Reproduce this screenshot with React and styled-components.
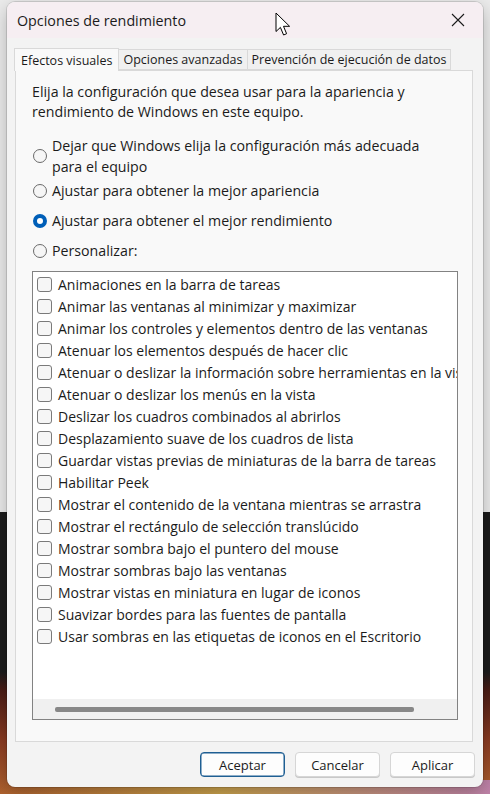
import { createGlobalStyle, styled } from 'styled-components';

const GlobalStyle = createGlobalStyle`
  html, body {
    margin: 0;
    height: 100%;
  }
  body {
    font-family: 'Open Sans', 'Noto Sans', sans-serif;
    color: #1b1b1b;
    background:
      linear-gradient(to right, rgba(214, 150, 60, 0) 0, rgba(214, 190, 90, 0.7) 45%, rgba(196, 140, 200, 0.8) 100%) bottom / 100% 14px no-repeat,
      linear-gradient(
        to bottom,
        #ebebeb 0,
        #ebebeb 512px,
        #1c1c1c 512px,
        #1c1c1c 672px,
        #4a1d16 690px,
        #8a3b22 740px,
        #b0622e 794px
      );
    overflow: hidden;
  }
`;

const options = [
  { label: ['Dejar que Windows elija la configuración más adecuada', 'para el equipo'], gap: 3 },
  { label: ['Ajustar para obtener la mejor apariencia'], gap: 9 },
  { label: ['Ajustar para obtener el mejor rendimiento'], gap: 9, checked: true },
  { label: ['Personalizar:'], gap: 0 },
];

const effects = [
  'Animaciones en la barra de tareas',
  'Animar las ventanas al minimizar y maximizar',
  'Animar los controles y elementos dentro de las ventanas',
  'Atenuar los elementos después de hacer clic',
  'Atenuar o deslizar la información sobre herramientas en la vista',
  'Atenuar o deslizar los menús en la vista',
  'Deslizar los cuadros combinados al abrirlos',
  'Desplazamiento suave de los cuadros de lista',
  'Guardar vistas previas de miniaturas de la barra de tareas',
  'Habilitar Peek',
  'Mostrar el contenido de la ventana mientras se arrastra',
  'Mostrar el rectángulo de selección translúcido',
  'Mostrar sombra bajo el puntero del mouse',
  'Mostrar sombras bajo las ventanas',
  'Mostrar vistas en miniatura en lugar de iconos',
  'Suavizar bordes para las fuentes de pantalla',
  'Usar sombras en las etiquetas de iconos en el Escritorio',
];

const tabs = ['Efectos visuales', 'Opciones avanzadas', 'Prevención de ejecución de datos'];

const CloseIcon = () => (
  <svg width="14" height="14" viewBox="0 0 14 14">
    <path d="M1 1 L13 13 M13 1 L1 13" stroke="#1b1b1b" strokeWidth="1.1" fill="none" />
  </svg>
);

const Pointer = () => (
  <Cursor width="17" height="25" viewBox="0 0 17 25">
    <path
      d="M1 1 L1 19.5 L5.4 15.4 L8.6 23 L11.6 21.7 L8.5 14.3 L14.6 14.3 Z"
      fill="#fff"
      stroke="#000"
      strokeWidth="1"
      strokeLinejoin="round"
    />
  </Cursor>
);

export default function App() {
  return (
    <>
      <GlobalStyle />
      <Window>
        <TitleBar>
          <Title>Opciones de rendimiento</Title>
          <Pointer />
          <CloseButton>
            <CloseIcon />
          </CloseButton>
        </TitleBar>

        <Content>
          <TabStrip>
            {tabs.map((t, i) => (
              <Tab key={t} $active={i === 0}>
                {t}
              </Tab>
            ))}
          </TabStrip>

          <Panel>
            <Intro>
              Elija la configuración que desea usar para la apariencia y
              <br />
              rendimiento de Windows en este equipo.
            </Intro>

            <RadioGroup>
              {options.map((o) => (
                <RadioRow key={o.label[0]} $gap={o.gap}>
                  <Radio $checked={o.checked} />
                  <RadioLabel>
                    {o.label.map((line) => (
                      <div key={line}>{line}</div>
                    ))}
                  </RadioLabel>
                </RadioRow>
              ))}
            </RadioGroup>

            <ListBox>
              <Items>
                {effects.map((e) => (
                  <Item key={e}>
                    <Check />
                    <span>{e}</span>
                  </Item>
                ))}
              </Items>
              <HScroll>
                <Thumb />
              </HScroll>
            </ListBox>
          </Panel>

          <Footer>
            <Button $primary>Aceptar</Button>
            <Button>Cancelar</Button>
            <Button>Aplicar</Button>
          </Footer>
        </Content>
      </Window>
    </>
  );
}

const Window = styled.div`
  width: 476px;
  height: 785px;
  margin: 2px 0 0 7px;
  display: flex;
  flex-direction: column;
  background: #f3f3f3;
  border-radius: 8px;
  overflow: hidden;
  box-shadow: 0 0 0 1px rgba(0, 0, 0, 0.12), 0 6px 18px rgba(0, 0, 0, 0.25);
`;

const TitleBar = styled.div`
  position: relative;
  height: 36px;
  flex: none;
  display: flex;
  align-items: center;
  justify-content: space-between;
  padding-left: 10px;
  background: #f6eef2;
`;

const Title = styled.div`
  font-size: 14.3px;
  color: #1b1b1b;
`;

const Cursor = styled.svg`
  position: absolute;
  left: 268px;
  top: 10px;
`;

const CloseButton = styled.div`
  width: 46px;
  height: 36px;
  display: flex;
  align-items: center;
  justify-content: center;
  margin-right: 2px;
`;

const Content = styled.div`
  flex: 1;
  display: flex;
  flex-direction: column;
  padding: 9px 10px 10px 8px;
`;

const TabStrip = styled.div`
  height: 23px;
  display: flex;
  align-items: flex-end;
  margin-left: -1px;
`;

const Tab = styled.div`
  height: ${(p) => (p.$active ? '23px' : '21px')};
  box-sizing: border-box;
  padding: 0 ${(p) => (p.$active ? '6px' : '4px')};
  display: flex;
  align-items: center;
  font-size: 12.5px;
  color: #1b1b1b;
  background: ${(p) => (p.$active ? '#f9f9f9' : '#f0f0f0')};
  border: 1px solid #d9d9d9;
  border-bottom: ${(p) => (p.$active ? 'none' : '1px solid #d9d9d9')};
  margin-left: ${(p) => (p.$active ? '0' : '-1px')};
  position: relative;
  z-index: ${(p) => (p.$active ? 1 : 0)};
  margin-bottom: ${(p) => (p.$active ? '-1px' : '0')};
`;

const Panel = styled.div`
  height: 672px;
  box-sizing: border-box;
  background: #f9f9f9;
  border: 1px solid #d9d9d9;
  padding: 11px 15px 0 16px;
  display: flex;
  flex-direction: column;
`;

const Intro = styled.div`
  font-size: 14.2px;
  line-height: 20px;
  color: #1b1b1b;
`;

const RadioGroup = styled.div`
  margin-top: 13px;
  display: flex;
  flex-direction: column;
`;

const RadioRow = styled.div`
  display: flex;
  align-items: center;
  gap: 5px;
  margin-bottom: ${(p) => p.$gap}px;
`;

const Radio = styled.span`
  width: 14px;
  height: 14px;
  flex: none;
  border-radius: 50%;
  box-sizing: border-box;
  margin-left: 1px;
  border: ${(p) => (p.$checked ? '4px solid #005fb8' : '1px solid #6a6a6a')};
  background: ${(p) => (p.$checked ? '#fff' : '#f6f6f6')};
`;

const RadioLabel = styled.div`
  font-size: 14.2px;
  line-height: 21px;
`;

const ListBox = styled.div`
  margin-top: 10px;
  width: 426px;
  height: 449px;
  box-sizing: border-box;
  border: 1px solid #828282;
  background: #fff;
  display: flex;
  flex-direction: column;
`;

const Items = styled.div`
  flex: 1;
  overflow: hidden;
  padding-top: 1px;
`;

const Item = styled.div`
  height: 22px;
  display: flex;
  align-items: center;
  gap: 6px;
  padding-left: 4px;
  white-space: nowrap;
  font-size: 14px;
`;

const Check = styled.span`
  width: 15px;
  height: 15px;
  flex: none;
  box-sizing: border-box;
  border: 1px solid #7a7a7a;
  border-radius: 3px;
  background: #f6f6f6;
`;

const HScroll = styled.div`
  height: 20px;
  flex: none;
  background: #f0f0f0;
  display: flex;
  align-items: center;
  padding-left: 22px;
`;

const Thumb = styled.div`
  width: 359px;
  height: 5px;
  border-radius: 2px;
  background: #878787;
`;

const Footer = styled.div`
  display: flex;
  justify-content: flex-end;
  gap: 10px;
  margin-top: 10px;
  margin-right: -2px;
`;

const Button = styled.div`
  width: 85px;
  height: 25px;
  box-sizing: border-box;
  display: flex;
  align-items: center;
  justify-content: center;
  font-size: 13px;
  color: #1b1b1b;
  background: #fdfdfd;
  border-radius: 4px;
  border: 1px solid ${(p) => (p.$primary ? '#1f5f93' : '#d6d6d6')};
  box-shadow: ${(p) => (p.$primary ? 'inset 0 0 0 0.5px #1f5f93' : '0 1px 0 #c8c8c8')};
`;
